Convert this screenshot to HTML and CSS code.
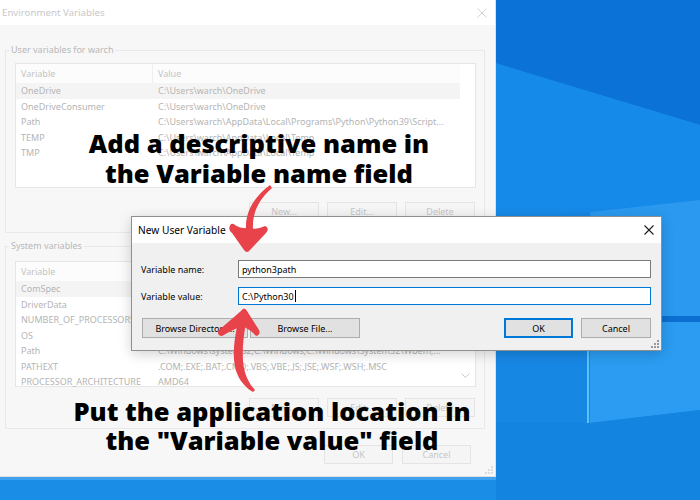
FILE: index.html
```html
<!DOCTYPE html>
<html lang="en">
<head>
  <meta charset="UTF-8" />
  <title>Environment Variables - New User Variable</title>
  <link rel="stylesheet" href="styles.css">
</head>
<body>
  <div class="desktop">
    <svg class="wallpaper" width="700" height="500" viewBox="0 0 700 500">
      <rect width="700" height="500" fill="#1787e4"/>
      <polygon points="495,0 700,0 700,125 495,63" fill="#0b73d7"/>
      <polygon points="495,63 700,125 700,200 590,212 495,220" fill="#168ae9"/>
      <polygon points="590,212 700,200 700,316 590,316" fill="#2a99ef"/>
      <polygon points="590,316 700,316 700,322 590,322" fill="#0b6fd2"/>
      <polygon points="590,322 700,322 700,410 590,423" fill="#2b9cf1"/>
      <rect x="587" y="322" width="2" height="101" fill="#5cc3fa"/>
      <polygon points="495,423 590,423 700,410 700,500 495,500" fill="#1484e1"/>
      <rect x="0" y="476" width="496" height="4" fill="#3fa2ee"/>
      <rect x="0" y="480" width="496" height="20" fill="#1a8de6"/>
    </svg>

    <div class="env">
      <div class="env-title">
        <span>Environment Variables</span>
        <svg width="10" height="10" viewBox="0 0 10 10"><path d="M0.5 0.5L9.5 9.5M9.5 0.5L0.5 9.5" stroke="#d2d2d2" stroke-width="1"/></svg>
      </div>
      <div class="env-body">
        <fieldset class="group user">
          <legend>User variables for warch</legend>
          <div class="list">
            <div class="list-head"><span class="c1">Variable</span><span class="c2">Value</span></div>
            <div class="row sel"><span class="c1">OneDrive</span><span class="c2">C:\Users\warch\OneDrive</span></div>
            <div class="row"><span class="c1">OneDriveConsumer</span><span class="c2">C:\Users\warch\OneDrive</span></div>
            <div class="row"><span class="c1">Path</span><span class="c2">C:\Users\warch\AppData\Local\Programs\Python\Python39\Script...</span></div>
            <div class="row"><span class="c1">TEMP</span><span class="c2">C:\Users\warch\AppData\Local\Temp</span></div>
            <div class="row"><span class="c1">TMP</span><span class="c2">C:\Users\warch\AppData\Local\Temp</span></div>
          </div>
          <div class="group-btns">
            <span class="btn">New...</span>
            <span class="btn">Edit...</span>
            <span class="btn">Delete</span>
          </div>
        </fieldset>

        <fieldset class="group sys">
          <legend>System variables</legend>
          <div class="list">
            <div class="list-head"><span class="c1">Variable</span><span class="c2">Value</span></div>
            <div class="row sel"><span class="c1">ComSpec</span><span class="c2">C:\Windows\system32\cmd.exe</span></div>
            <div class="row"><span class="c1">DriverData</span><span class="c2">C:\Windows\System32\Drivers\DriverData</span></div>
            <div class="row"><span class="c1">NUMBER_OF_PROCESSORS</span><span class="c2">8</span></div>
            <div class="row"><span class="c1">OS</span><span class="c2">Windows_NT</span></div>
            <div class="row"><span class="c1">Path</span><span class="c2">C:\Windows\system32;C:\Windows;C:\Windows\System32\Wbem;...</span></div>
            <div class="row"><span class="c1">PATHEXT</span><span class="c2">.COM;.EXE;.BAT;.CMD;.VBS;.VBE;.JS;.JSE;.WSF;.WSH;.MSC</span></div>
            <div class="row"><span class="c1">PROCESSOR_ARCHITECTURE</span><span class="c2">AMD64</span></div>
            <svg class="scroll-down" width="9" height="6" viewBox="0 0 9 6"><path d="M0.5 0.5L4.5 4.5L8.5 0.5" fill="none" stroke="#c8c8c8"/></svg>
          </div>
          <div class="group-btns">
            <span class="btn">New...</span>
            <span class="btn">Edit...</span>
            <span class="btn">Delete</span>
          </div>
        </fieldset>

        <div class="env-foot">
          <span class="btn">OK</span>
          <span class="btn">Cancel</span>
        </div>
      </div>
      <svg class="grip" width="8" height="8" viewBox="0 0 8 8" fill="#dcdcdc"><rect x="6" y="0" width="2" height="2"/><rect x="3" y="3" width="2" height="2"/><rect x="6" y="3" width="2" height="2"/><rect x="0" y="6" width="2" height="2"/><rect x="3" y="6" width="2" height="2"/><rect x="6" y="6" width="2" height="2"/></svg>
    </div>

    <div class="nuv">
      <div class="nuv-title">
        <span>New User Variable</span>
        <svg width="10" height="10" viewBox="0 0 10 10"><path d="M0.5 0.5L9.5 9.5M9.5 0.5L0.5 9.5" stroke="#1b1b1b" stroke-width="1.1"/></svg>
      </div>
      <div class="nuv-body">
        <div class="field">
          <span class="label">Variable name:</span>
          <div class="input">python3path</div>
        </div>
        <div class="field">
          <span class="label">Variable value:</span>
          <div class="input focus">C:\Python30<span class="caret"></span></div>
        </div>
        <div class="nuv-btns">
          <span class="wbtn browse-dir">Browse Directory...</span>
          <span class="wbtn browse-file">Browse File...</span>
          <span class="spacer"></span>
          <span class="wbtn default">OK</span>
          <span class="wbtn">Cancel</span>
        </div>
      </div>
      <svg class="grip" width="8" height="8" viewBox="0 0 8 8" fill="#9a9a9a"><rect x="6" y="0" width="2" height="2"/><rect x="3" y="3" width="2" height="2"/><rect x="6" y="3" width="2" height="2"/><rect x="0" y="6" width="2" height="2"/><rect x="3" y="6" width="2" height="2"/><rect x="6" y="6" width="2" height="2"/></svg>
    </div>

    <p class="note note-top">Add a descriptive name in<br>the Variable name field</p>
    <p class="note note-bottom">Put the application location in<br>the "Variable value" field</p>

    <svg class="arrows" width="700" height="500" viewBox="0 0 700 500" fill="#e8424a">
      <!-- down arrow to the name field -->
      <path d="M270,185 C254,197 245,212 246,230 L253,230 C252,214 258,200 272,188 Z"/>
      <path d="M231,224 Q227,229 232,233 L244,250 Q247,254 250,250 L266,233 Q270,228 265,226 Q257,230 250,228 Q241,229 235,225 Q233,223 231,224 Z"/>
      <!-- up arrow to the value field -->
      <path d="M238,322 C233,345 231,366 241,381 Q247,389 253,392 L255,390 Q250,385 247,378 C241,364 242,345 246,322 Z"/>
      <path d="M219,330 Q216,335 222,336 Q232,330 242,326 Q251,330 256,336 Q261,335 259,330 L247,311 Q244,306 241,311 Z"/>
    </svg>
  </div>
</body>
</html>
```

FILE: styles.css
```css
* {
  box-sizing: border-box;
}

body {
  margin: 0;
  width: 700px;
  height: 500px;
  overflow: hidden;
  font-family: "Noto Sans", "Open Sans", sans-serif;
}

.desktop {
  position: relative;
  width: 700px;
  height: 500px;
  overflow: hidden;
}

.wallpaper {
  position: absolute;
  left: 0;
  top: 0;
}

/* faded Environment Variables window */
.env {
  position: absolute;
  left: 0;
  top: 0;
  width: 496px;
  height: 477px;
  background: #f7f7f7;
  border-right: 1px solid #e0e0e0;
  border-bottom: 1px solid #e0e0e0;
  font-size: 9px;
  color: #b4b4b4;
}

.env-title {
  height: 25px;
  background: #fff;
  display: flex;
  align-items: center;
  justify-content: space-between;
  padding: 0 8px 0 2px;
  font-size: 9.7px;
  color: #c8c8c8;
}

.env-body {
  padding: 17px 0 0 5px;
}

.group {
  margin: 0;
  padding: 0;
  width: 480px;
  border: 1px solid #e8e8e8;
  min-width: 0;
}

.group legend {
  margin-left: 3px;
  padding: 0 2px;
  line-height: 16px;
  color: #b8b8b8;
}

.group.sys {
  margin-top: 5px;
}

.list {
  position: relative;
  margin: 5px 0 0 9px;
  width: 461px;
  height: 125px;
  background: #fff;
  border: 1px solid #e6e6e6;
}

.sys .list {
  margin-top: 7px;
  height: 126px;
}

.list-head,
.row {
  display: flex;
  align-items: center;
  width: 444px;
  white-space: nowrap;
}

.list-head {
  height: 19px;
  background: #fcfcfc;
  color: #c4c4c4;
}

.row {
  height: 15.5px;
}

.row.sel {
  background: #f4f4f4;
}

.c1 {
  width: 137px;
  padding-left: 5px;
  flex-shrink: 0;
}

.list-head .c1 {
  border-right: 1px solid #efefef;
  height: 19px;
  line-height: 19px;
}

.c2 {
  padding-left: 5px;
}

.scroll-down {
  position: absolute;
  right: 5px;
  bottom: 7px;
}

.group-btns {
  display: flex;
  justify-content: flex-end;
  gap: 8px;
  margin: 14px 9px 11px 0;
}

.sys .group-btns {
  margin-top: 11px;
}

.btn {
  display: flex;
  align-items: center;
  justify-content: center;
  width: 70px;
  height: 19px;
  border: 1px solid #e4e4e4;
  background: #f5f5f5;
  color: #c6c6c6;
}

.env-foot {
  display: flex;
  justify-content: flex-end;
  gap: 9px;
  width: 480px;
  padding-right: 14px;
  margin-top: 16px;
}

.env-foot .btn {
  width: 69px;
}

.grip {
  position: absolute;
  right: 2px;
  bottom: 2px;
}

/* New User Variable dialog */
.nuv {
  position: absolute;
  left: 131px;
  top: 216px;
  width: 531px;
  height: 135px;
  background: #f0f0f0;
  border: 1px solid #8f8f8f;
  box-shadow: 0 3px 12px rgba(0, 0, 0, 0.18);
  font-size: 9px;
  color: #000;
}

.nuv-title {
  height: 26px;
  background: #fff;
  display: flex;
  align-items: center;
  justify-content: space-between;
  padding: 0 7px 0 6px;
  font-size: 10.2px;
}

.nuv-body {
  padding: 17px 10px 0 9px;
}

.field {
  display: flex;
  align-items: center;
  height: 18px;
}

.field + .field {
  margin-top: 9px;
}

.label {
  width: 97px;
  flex-shrink: 0;
}

.input {
  flex: 1;
  height: 18px;
  display: flex;
  align-items: center;
  padding-left: 3px;
  background: #fff;
  border: 1px solid #7a7a7a;
}

.input.focus {
  border-color: #0078d7;
}

.caret {
  display: inline-block;
  width: 1px;
  height: 12px;
  background: #000;
  margin-left: 1px;
}

.nuv-btns {
  display: flex;
  margin-top: 13px;
}

.wbtn {
  display: flex;
  align-items: center;
  justify-content: center;
  height: 20px;
  width: 70px;
  background: #e1e1e1;
  border: 1px solid #adadad;
}

.wbtn + .wbtn {
  margin-left: 8px;
}

.browse-dir {
  width: 106px;
  margin-left: 1px;
}

.wbtn.browse-file {
  width: 110px;
  margin-left: 2px;
}

.spacer {
  flex: 1;
}

.wbtn.default {
  width: 69px;
  border: 2px solid #0078d7;
}

/* annotations */
.note {
  position: absolute;
  left: 0;
  margin: 0;
  text-align: center;
  font-family: "Open Sans", "Noto Sans", sans-serif;
  font-weight: 800;
  font-size: 25.5px;
  line-height: 30px;
  color: #000;
}

.note-top {
  top: 128px;
  width: 518px;
}

.note-bottom {
  top: 397px;
  width: 544px;
  line-height: 29px;
}

.arrows {
  position: absolute;
  left: 0;
  top: 0;
}
```
